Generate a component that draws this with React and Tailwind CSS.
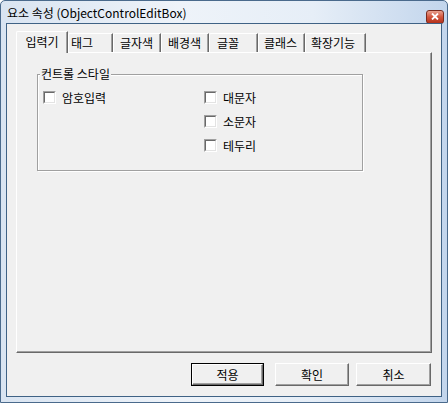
import React from "react";

const FONT = { fontFamily: '"Noto Sans CJK KR", "Noto Sans", sans-serif' };

function Check({ label }) {
  return (
    <div className="flex items-center h-[13px] gap-[6px]">
      <div className="w-[13px] h-[13px] border border-t-[#a0a0a0] border-l-[#a0a0a0] border-r-white border-b-white shrink-0">
        <div className="w-full h-full border border-t-[#696969] border-l-[#696969] border-r-[#e3e3e3] border-b-[#e3e3e3] bg-white" />
      </div>
      <span className="text-[12px] leading-[14px] text-black">{label}</span>
    </div>
  );
}

function Tab({ label, w, pl }) {
  return (
    <div
      className="h-[19px] border-t border-l border-t-white border-l-white border-r border-r-[#696969] shadow-[inset_-1px_0_0_#a0a0a0] rounded-tl-[2px] flex items-center text-[12px] leading-[14px] text-black shrink-0"
      style={{ width: w, paddingLeft: pl }}
    >
      {label}
    </div>
  );
}

function Button({ label, w, def }) {
  return (
    <div
      className={
        "h-[23px] flex " +
        (def ? "border border-black" : "")
      }
      style={{ width: w }}
    >
      <div className="flex-1 border border-t-white border-l-white border-r-[#696969] border-b-[#696969] shadow-[inset_-1px_-1px_0_#a0a0a0] bg-[#f0f0f0] flex items-center justify-center text-[12px] leading-[14px] text-black">
        {label}
      </div>
    </div>
  );
}

export default function App() {
  return (
    <div
      className="w-[448px] h-[403px] flex flex-col border border-[#4a6a8c] rounded-t-[5px] bg-[linear-gradient(90deg,#d9e4f1_0%,#eef3f9_40%,#e6eef7_70%,#c2d5ec_100%)]"
      style={FONT}
    >
      {/* title bar */}
      <div className="h-[22px] flex items-center pl-[6px] pr-[3px] shrink-0">
        <span className="text-[12px] leading-[14px] text-black flex-1 pt-[1px]">
          요소 속성 (ObjectControlEditBox)
        </span>
        <div className="w-[18px] h-[14px] mt-[9px] rounded-[3px] border border-[#7a2a1e] bg-[linear-gradient(180deg,#e9a18f_0%,#d2553d_50%,#b5321c_100%)] flex items-center justify-center">
          <svg width="8" height="7" viewBox="0 0 8 7">
            <path d="M1 0.5 L7 6.5 M7 0.5 L1 6.5" stroke="white" strokeWidth="1.8" />
          </svg>
        </div>
      </div>

      {/* client area */}
      <div className="flex-1 mx-[5px] mb-[5px] border border-[#3f6285] bg-[#f0f0f0] flex flex-col">
        {/* tabs */}
        <div className="ml-[9px] mt-[7px] h-[21px] flex items-end">
          <div className="relative z-10 h-[22px] -mb-[1px] w-[52px] bg-[#f0f0f0] border-t border-l border-t-white border-l-white border-r border-r-[#696969] shadow-[inset_-1px_0_0_#a0a0a0] rounded-tl-[2px] flex items-start justify-center pt-[3px] text-[12px] leading-[14px] text-black shrink-0">
            입력기
          </div>
          <Tab label="태그" w={45} pl={2} />
          <Tab label="글자색" w={48} pl={6} />
          <Tab label="배경색" w={48} pl={6} />
          <Tab label="글꼴" w={49} pl={7} />
          <Tab label="클래스" w={47} pl={5} />
          <Tab label="확장기능" w={61} pl={5} />
        </div>

        {/* tab body */}
        <div className="ml-[9px] w-[416px] h-[301px] border border-t-white border-l-white border-r-[#696969] border-b-[#696969] shadow-[inset_-1px_-1px_0_#a0a0a0] flex flex-col">
          <div className="ml-[20px] mt-[21px] w-[326px] h-[97px] relative border border-[#a0a0a0] shadow-[inset_1px_1px_0_white,1px_1px_0_white] flex pl-[5px] pt-[16px]">
            <span className="absolute -top-[8px] left-[2px] px-[1px] bg-[#f0f0f0] text-[12px] leading-[14px] text-black">
              컨트롤 스타일
            </span>
            <div className="w-[161px]">
              <Check label="암호입력" />
            </div>
            <div className="flex flex-col gap-[11px]">
              <Check label="대문자" />
              <Check label="소문자" />
              <Check label="테두리" />
            </div>
          </div>
        </div>

        {/* buttons */}
        <div className="mt-[10px] flex justify-end pr-[10px]">
          <Button label="적용" w={73} def />
          <div className="w-[11px]" />
          <Button label="확인" w={74} />
          <div className="w-[7px]" />
          <Button label="취소" w={75} />
        </div>
      </div>
    </div>
  );
}
